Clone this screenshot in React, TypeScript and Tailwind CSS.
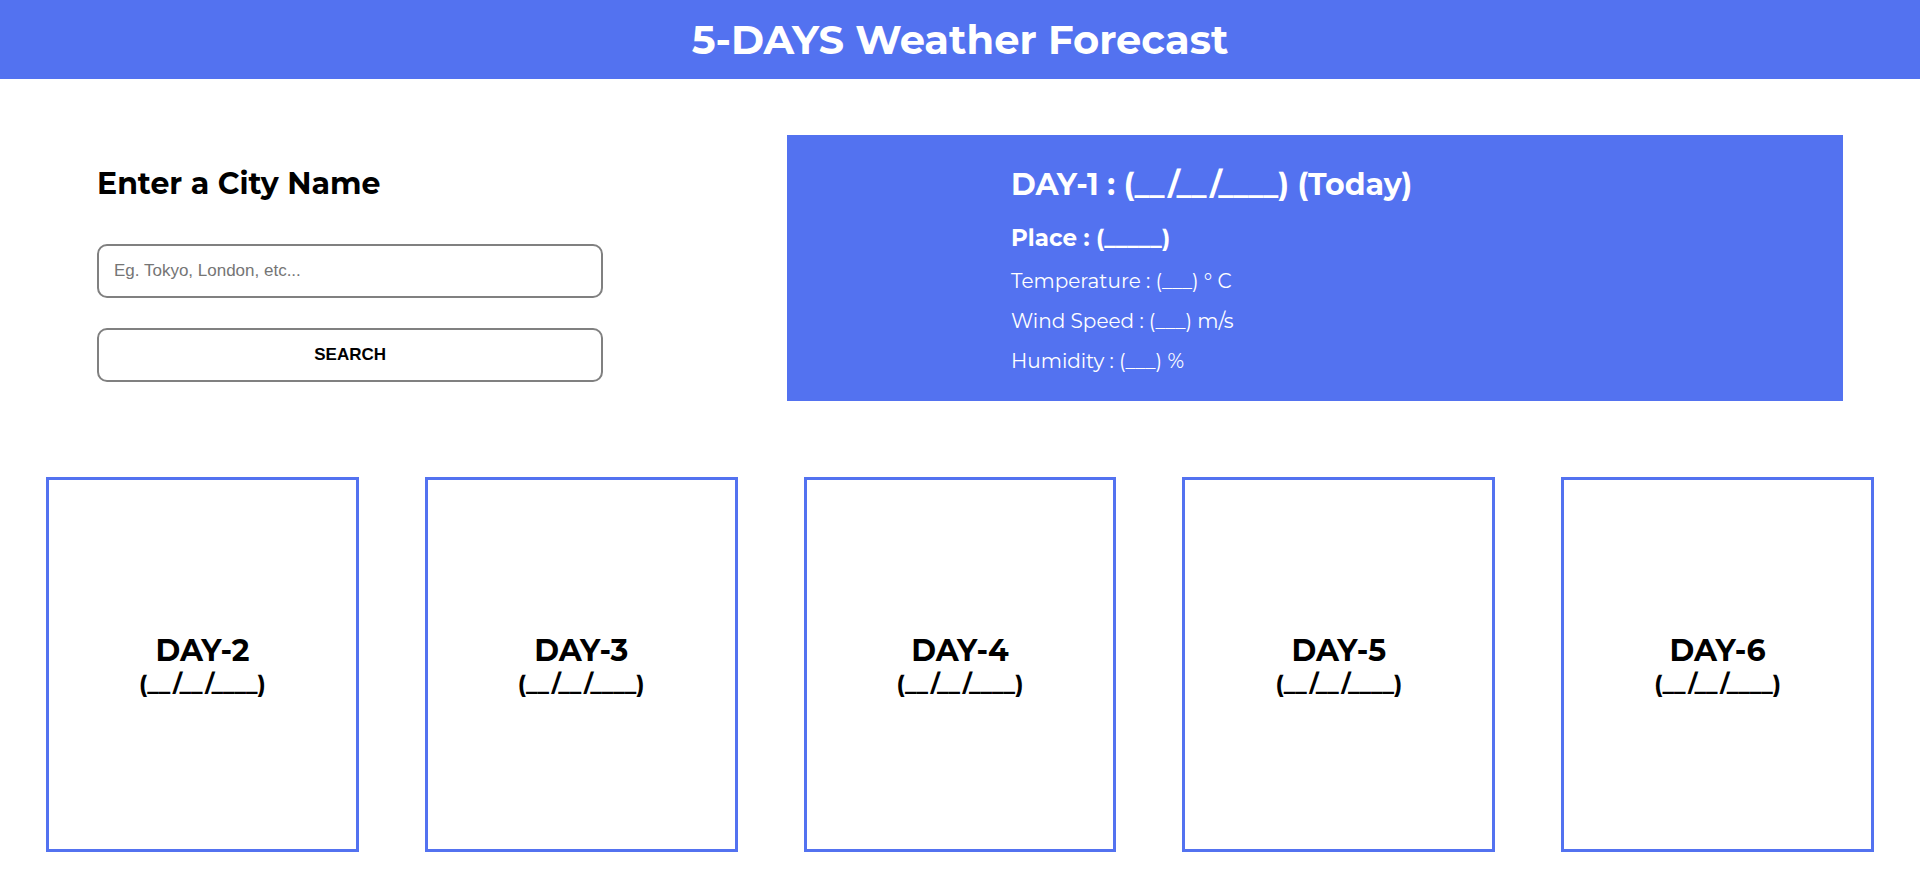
const forecastDays = [2, 3, 4, 5, 6];

function Header() {
  return (
    <header className="bg-[#5372f0] py-4 text-center text-white">
      <h1 className="text-[40px] leading-[47px] font-bold">5-DAYS Weather Forecast</h1>
    </header>
  );
}

function SearchForm() {
  return (
    <form className="flex w-[29%] flex-col pt-[31px]" onSubmit={(event) => event.preventDefault()}>
      <label htmlFor="city" className="text-[30px] leading-9 font-bold">
        Enter a City Name
      </label>
      <input
        id="city"
        type="text"
        placeholder="Eg. Tokyo, London, etc..."
        className="mt-[42px] h-[54px] rounded-[10px] border-2 border-[#808080] bg-white px-[15px] font-['Liberation_Sans',Arial,sans-serif] text-[17px] text-black placeholder:text-[#757575]"
      />
      <button
        type="submit"
        className="mt-[30px] h-[54px] rounded-[10px] border-2 border-[#808080] bg-white font-['Liberation_Sans',Arial,sans-serif] text-[17px] font-bold text-black"
      >
        SEARCH
      </button>
    </form>
  );
}

function TodayPanel() {
  return (
    <section className="w-[55vw] bg-[#5372f0] pt-8 pb-5 pl-56 text-white">
      <h2 className="text-[30px] leading-9 font-bold whitespace-nowrap">DAY-1 : (__/__/____) (Today)</h2>
      <h3 className="mt-[21px] text-[23px] leading-7 font-bold">Place : (_____)</h3>
      <div className="mt-[9px] text-xl leading-10">
        <p>Temperature : (___) ° C</p>
        <p>Wind Speed : (___) m/s</p>
        <p>Humidity : (___) %</p>
      </div>
    </section>
  );
}

function DayCard({ day }: { day: number }) {
  return (
    <article className="flex h-[375px] flex-col items-center justify-center border-3 border-[#5372f0] pt-[3px] font-bold">
      <h2 className="text-[30px] leading-9">DAY-{day}</h2>
      <p className="text-[23px] leading-[31px]">(__/__/____)</p>
    </article>
  );
}

export default function App() {
  return (
    <div className="min-h-screen bg-white font-[Montserrat,Inter,sans-serif] text-black">
      <Header />
      <main>
        <div className="flex justify-between pt-14 pr-[77px] pl-[97px]">
          <SearchForm />
          <TodayPanel />
        </div>
        <div className="mt-[76px] grid grid-cols-5 gap-[66px] px-[46px] pb-9">
          {forecastDays.map((day) => (
            <DayCard key={day} day={day} />
          ))}
        </div>
      </main>
    </div>
  );
}
